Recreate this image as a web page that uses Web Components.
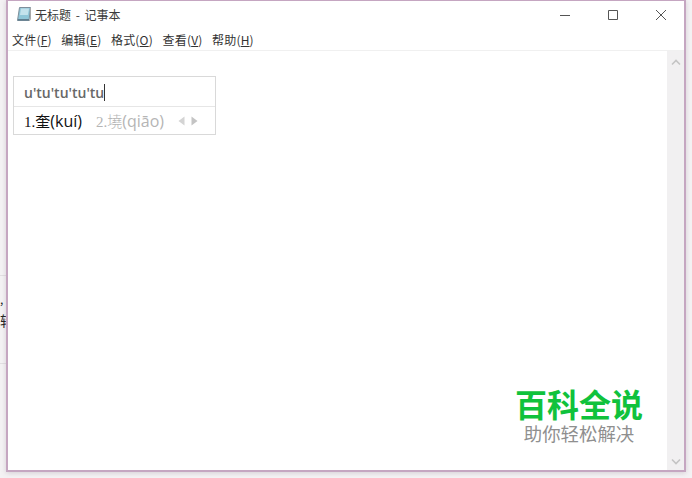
<!DOCTYPE html>
<html lang="zh">
<head>
<meta charset="utf-8">
<title>无标题 - 记事本</title>
<style>
  html, body { margin: 0; height: 100%; }
  body { width: 692px; height: 478px; overflow: hidden; background: #f4f2f4; }
</style>
</head>
<body>
<np-desktop>
  <np-window>
    <np-titlebar slot="title">无标题 - 记事本</np-titlebar>
    <np-menubar slot="menu"></np-menubar>
    <np-ime slot="overlay" composing="u'tu'tu'tu'tu"></np-ime>
    <np-watermark slot="overlay" title-text="百科全说" tagline="助你轻松解决"></np-watermark>
  </np-window>
</np-desktop>

<script>
const FONT = `"Noto Sans CJK SC", "Liberation Sans", sans-serif`;

class NpDesktop extends HTMLElement {
  constructor() {
    super();
    this.attachShadow({ mode: "open" });
    this.shadowRoot.innerHTML = /* html */ `
    <style>
      :host {
        display: flex;
        position: relative;
        box-sizing: border-box;
        width: 692px;
        height: 478px;
        padding: 0 6px 6px 6px;
        overflow: hidden;
        font-family: ${FONT};
      }
      .scrap { position: absolute; left: 0; font-size: 14px; line-height: 16px; color: #222; }
      .rule { position: absolute; left: 0; width: 6px; height: 1px; background: #e2dfe2; }
    </style>
    <div class="rule" style="top: 275px"></div>
    <div class="rule" style="top: 363px"></div>
    <div class="scrap" style="top: 291px; font-size: 12px">,</div>
    <div class="scrap" style="top: 312px">转</div>
    <slot></slot>`;
  }
}

class NpWindow extends HTMLElement {
  constructor() {
    super();
    this.attachShadow({ mode: "open" });
    this.shadowRoot.innerHTML = /* html */ `
    <style>
      :host {
        display: flex;
        flex-direction: column;
        flex: 1;
        position: relative;
        background: #fff;
        border: 1px solid #c5a6c1;
        border-width: 1px 2px 2px 2px;
        box-shadow: 0 1px 5px rgba(120, 100, 120, .25);
      }
      .client {
        flex: 1;
        display: flex;
        position: relative;
        min-height: 0;
        border-top: 1px solid #f0f0f0;
      }
      .edit { flex: 1; position: relative; }
    </style>
    <slot name="title"></slot>
    <slot name="menu"></slot>
    <div class="client">
      <div class="edit"><slot name="overlay"></slot></div>
      <np-scrollbar></np-scrollbar>
    </div>`;
  }
}

class NpTitlebar extends HTMLElement {
  constructor() {
    super();
    this.attachShadow({ mode: "open" });
    this.shadowRoot.innerHTML = /* html */ `
    <style>
      :host {
        display: flex;
        align-items: center;
        box-sizing: border-box;
        height: 29px;
        padding: 0 0 3px 8px;
        font-size: 12px;
        color: #3a3a3a;
      }
      svg { display: block; flex: none; }
      .label { margin-left: 2px; flex: 1; word-spacing: 2px; }
      .buttons { display: flex; gap: 2px; color: #555; margin-top: 1px; }
      .buttons span { width: 46px; height: 26px; display: flex; align-items: center; justify-content: center; }
    </style>
    <svg width="17" height="16" viewBox="0 0 17 16">
      <path d="M3.5 1.5 H14.5 L13 14.5 H1.5 Z" fill="#8fc6d8" stroke="#7d8f9b"/>
      <path d="M5 2.5 H13 L11.8 9 H4 Z" fill="#c3e2ec"/>
      <path d="M2 13 H13 V14.5 H1.6 Z" fill="#5f7d8e"/>
      <path d="M14.5 2 V13.5 L13.2 15" fill="none" stroke="#a8a8a8"/>
    </svg>
    <span class="label"><slot></slot></span>
    <div class="buttons">
      <span><svg width="12" height="12" viewBox="0 0 12 12"><path d="M1 6.5 H11" stroke="currentColor" fill="none"/></svg></span>
      <span><svg width="12" height="12" viewBox="0 0 12 12"><path d="M1.5 1.5 H10.5 V10.5 H1.5 Z" stroke="currentColor" fill="none"/></svg></span>
      <span><svg width="12" height="12" viewBox="0 0 12 12"><path d="M1 1 L11 11 M11 1 L1 11" stroke="currentColor" fill="none"/></svg></span>
    </div>`;
  }
}

class NpMenubar extends HTMLElement {
  constructor() {
    super();
    this.attachShadow({ mode: "open" });
    const items = [["文件", "F"], ["编辑", "E"], ["格式", "O"], ["查看", "V"], ["帮助", "H"]];
    this.shadowRoot.innerHTML = /* html */ `
    <style>
      :host {
        display: flex;
        gap: 9.5px;
        box-sizing: border-box;
        height: 20px;
        align-items: center;
        padding: 0 0 2px 4px;
        font-size: 12px;
        letter-spacing: .2px;
        color: #333;
      }
      u { text-underline-offset: 1px; }
    </style>
    ${items.map(([name, key]) => `<span>${name}(<u>${key}</u>)</span>`).join("")}`;
  }
}

class NpScrollbar extends HTMLElement {
  constructor() {
    super();
    this.attachShadow({ mode: "open" });
    this.shadowRoot.innerHTML = /* html */ `
    <style>
      :host {
        display: flex;
        flex-direction: column;
        justify-content: space-between;
        align-items: center;
        flex: none;
        width: 17px;
        padding: 8px 0 5px 1px;
        box-sizing: border-box;
        background: #f1f0f1;
        color: #c4c4c4;
      }
      svg { display: block; }
    </style>
    <svg width="10" height="7" viewBox="0 0 10 7"><path d="M1 5.5 L5 1.5 L9 5.5" fill="none" stroke="currentColor" stroke-width="1.6"/></svg>
    <svg width="10" height="7" viewBox="0 0 10 7"><path d="M1 1.5 L5 5.5 L9 1.5" fill="none" stroke="currentColor" stroke-width="1.6"/></svg>`;
  }
}

class NpIme extends HTMLElement {
  constructor() {
    super();
    this.attachShadow({ mode: "open" });
    this.shadowRoot.innerHTML = /* html */ `
    <style>
      :host {
        display: block;
        position: absolute;
        left: 5px;
        top: 25px;
        width: 203px;
        box-sizing: border-box;
        background: #fff;
        border: 1px solid #d9d9d9;
        font-family: "Open Sans", "Noto Sans CJK SC", sans-serif;
      }
      .comp {
        box-sizing: border-box;
        height: 30px;
        display: flex;
        align-items: center;
        padding: 1px 0 0 10px;
        font-size: 14px;
        font-weight: 600;
        color: #686868;
        border-bottom: 1px solid #e6e6e6;
      }
      .caret { width: 1px; height: 17px; background: #333; }
      .cands {
        box-sizing: border-box;
        height: 27px;
        display: flex;
        align-items: center;
        padding: 1px 0 0 10px;
        font-size: 16px;
        color: #111;
      }
      .num { font-family: "Liberation Serif", serif; font-size: 15px; }
      .cjk { font-family: "Noto Sans CJK SC", sans-serif; font-size: 15px; }
      .second { color: #b5b5b5; margin-left: 14px; }
      .second .cjk { font-weight: 300; }
      .arrows { display: flex; gap: 6px; margin-left: 14px; }
      .arrows svg { display: block; }
    </style>
    <div class="comp"><span>${this.getAttribute("composing")}</span><span class="caret"></span></div>
    <div class="cands">
      <span><span class="num">1.</span><span class="cjk">奎</span>(kuí)</span>
      <span class="second"><span class="num">2.</span><span class="cjk">墝</span>(qiāo)</span>
      <span class="arrows">
        <svg width="7" height="10" viewBox="0 0 7 10"><path d="M6.5 0.5 V9.5 L0.5 5 Z" fill="#d4d4d4"/></svg>
        <svg width="7" height="10" viewBox="0 0 7 10"><path d="M0.5 0.5 V9.5 L6.5 5 Z" fill="#c4c4c4"/></svg>
      </span>
    </div>`;
  }
}

class NpWatermark extends HTMLElement {
  constructor() {
    super();
    this.attachShadow({ mode: "open" });
    this.shadowRoot.innerHTML = /* html */ `
    <style>
      :host {
        display: flex;
        flex-direction: column;
        align-items: center;
        gap: 2px;
        position: absolute;
        right: 24px;
        bottom: 25px;
        width: 128px;
      }
      .big { font-size: 32px; line-height: 32px; font-weight: 700; color: #10c23c; white-space: nowrap; }
      .small { font-size: 18.4px; line-height: 24px; color: #8f8f8f; white-space: nowrap; }
    </style>
    <div class="big">${this.getAttribute("title-text")}</div>
    <div class="small">${this.getAttribute("tagline")}</div>`;
  }
}

customElements.define("np-desktop", NpDesktop);
customElements.define("np-window", NpWindow);
customElements.define("np-titlebar", NpTitlebar);
customElements.define("np-menubar", NpMenubar);
customElements.define("np-scrollbar", NpScrollbar);
customElements.define("np-ime", NpIme);
customElements.define("np-watermark", NpWatermark);
</script>
</body>
</html>
